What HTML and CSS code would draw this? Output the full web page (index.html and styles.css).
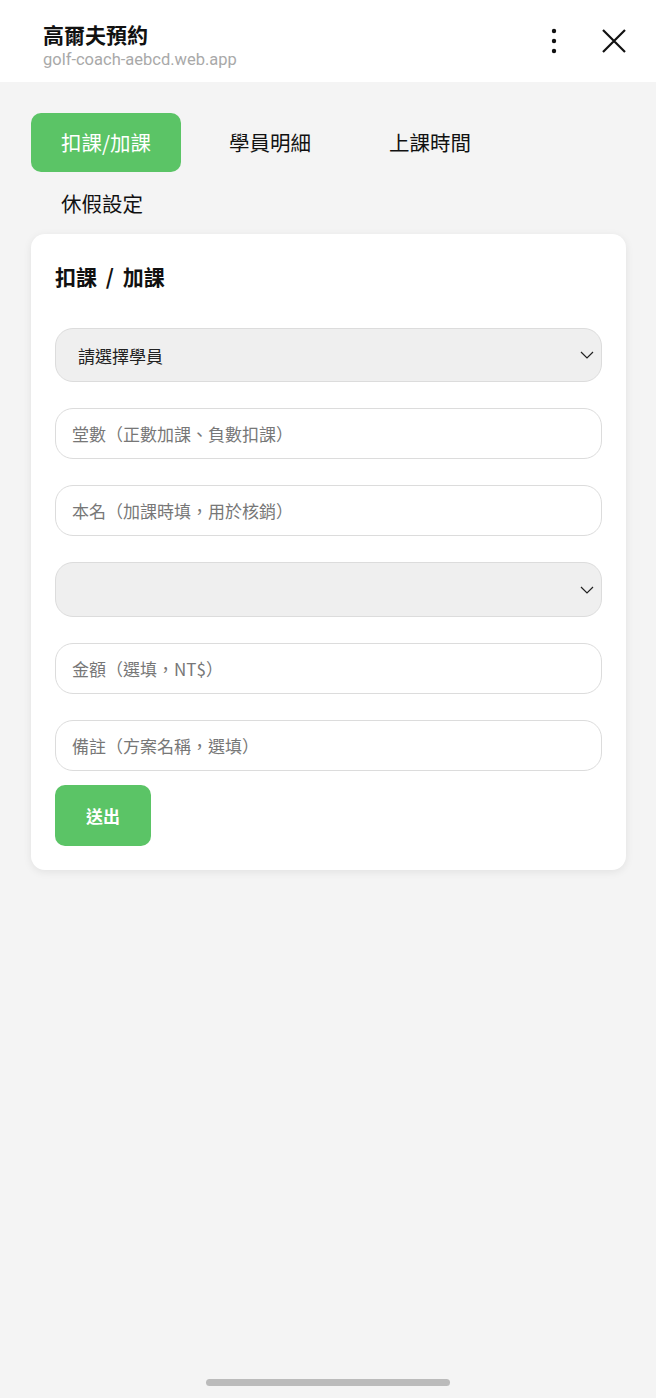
FILE: index.html
```html
<!DOCTYPE html>
<html lang="zh-Hant">
<head>
<meta charset="utf-8">
<meta name="viewport" content="width=device-width, initial-scale=1">
<title>高爾夫預約</title>
<link rel="stylesheet" href="styles.css">
</head>
<body>
<header class="topbar">
  <div class="brand">
    <div class="app-title">高爾夫預約</div>
    <div class="app-url">golf-coach-aebcd.web.app</div>
  </div>
  <div class="top-actions">
    <svg class="icon-more" width="12" height="28" viewBox="0 0 12 28"><circle cx="6" cy="4" r="2.2"/><circle cx="6" cy="14" r="2.2"/><circle cx="6" cy="24" r="2.2"/></svg>
    <svg class="icon-close" width="26" height="26" viewBox="0 0 26 26"><path d="M2 2 L24 24 M24 2 L2 24" stroke="#111" stroke-width="2.2" fill="none"/></svg>
  </div>
</header>
<main class="content">
  <nav class="tabs">
    <button class="tab active">扣課/加課</button>
    <button class="tab">學員明細</button>
    <button class="tab">上課時間</button>
    <button class="tab">休假設定</button>
  </nav>
  <section class="card">
    <h2 class="card-title">扣課 / 加課</h2>
    <form class="form">
      <select class="field select tall"><option>請選擇學員</option></select>
      <input class="field" type="text" placeholder="堂數（正數加課、負數扣課）">
      <input class="field" type="text" placeholder="本名（加課時填，用於核銷）">
      <select class="field select tall2"><option></option></select>
      <input class="field" type="text" placeholder="金額（選填，NT$）">
      <input class="field" type="text" placeholder="備註（方案名稱，選填）">
      <button type="button" class="submit">送出</button>
    </form>
  </section>
</main>
<div class="home-indicator"></div>
</body>
</html>
```
FILE: styles.css
```css
* { box-sizing: border-box; }
html, body { margin: 0; padding: 0; }
body {
  background: #f4f4f4;
  font-family: "Noto Sans CJK TC", "Noto Sans", Roboto, sans-serif;
  color: #111;
  width: 656px;
  height: 1398px;
  position: relative;
  overflow: hidden;
}
.topbar {
  height: 82px;
  background: #fff;
  display: flex;
  justify-content: space-between;
  align-items: flex-start;
  padding: 0 29px 0 43px;
}
.brand { padding-top: 20px; }
.app-title {
  font-size: 21px;
  font-weight: 700;
  line-height: 28px;
  color: #111;
}
.app-url {
  font-family: Roboto, "Noto Sans", sans-serif;
  font-size: 16.5px;
  line-height: 20px;
  color: #a9a9a9;
  margin-top: 2px;
}
.top-actions {
  display: flex;
  align-items: center;
  gap: 41px;
  padding-top: 27px;
}
.icon-more { fill: #111; }
.icon-close { display: block; }

.content { padding: 31px 30px 0 31px; }
.tabs {
  display: flex;
  flex-wrap: wrap;
  column-gap: 18px;
  row-gap: 2px;
}
.tab {
  font-family: "Noto Sans CJK TC", sans-serif;
  font-size: 20.5px;
  height: 59px;
  padding: 0 30px;
  border: none;
  border-radius: 10px;
  background: transparent;
  color: #111;
  line-height: 59px;
}
.tab.active { background: #5bc466; color: #fff; }

.card {
  margin-top: 1px;
  background: #fff;
  border-radius: 14px;
  box-shadow: 0 2px 8px rgba(0,0,0,0.08);
  padding: 28px 24px 24px 24px;
}
.card-title {
  margin: 0;
  font-size: 21px;
  font-weight: 700;
  line-height: 28px;
  word-spacing: 4px;
}
.form {
  display: flex;
  flex-direction: column;
  gap: 26px;
  margin-top: 38px;
}
.field {
  width: 100%;
  height: 51px;
  border: 1px solid #dcdcdc;
  border-radius: 18px;
  background: #fff;
  font-family: "Noto Sans CJK TC", sans-serif;
  font-size: 17px;
  padding: 0 16px;
  color: #222;
  outline: none;
}
.field::placeholder { color: #777; }
.select {
  appearance: none;
  -webkit-appearance: none;
  background-color: #efefef;
  background-image: url("data:image/svg+xml,%3Csvg xmlns='http://www.w3.org/2000/svg' width='14' height='8' viewBox='0 0 14 8'%3E%3Cpath d='M1 1 L7 7 L13 1' stroke='%23222' stroke-width='1.2' fill='none'/%3E%3C/svg%3E");
  background-repeat: no-repeat;
  background-position: right 7px center;
  padding-left: 22px;
}
.tall { height: 54px; }
.tall2 { height: 55px; }
.submit {
  align-self: flex-start;
  margin-top: -12px;
  width: 96px;
  height: 61px;
  border: none;
  border-radius: 10px;
  background: #5bc466;
  color: #fff;
  font-family: "Noto Sans CJK TC", sans-serif;
  font-size: 17px;
  font-weight: 700;
}
.home-indicator {
  position: absolute;
  left: 206px;
  top: 1379px;
  width: 244px;
  height: 7px;
  border-radius: 4px;
  background: #bbb;
}
```
